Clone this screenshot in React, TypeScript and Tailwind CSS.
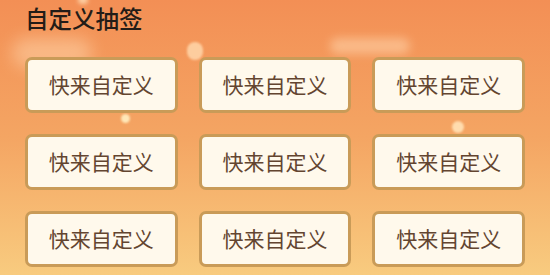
import React from 'react';

const items = Array.from({ length: 9 }, () => '快来自定义');

export default function App() {
  return (
    <div
      className="relative w-[550px] h-[275px] overflow-hidden bg-gradient-to-b from-[#f38f55] via-[#f4a563] to-[#f8cb7f]"
      style={{ fontFamily: '"Noto Sans CJK SC", "Noto Sans", sans-serif' }}
    >
      {/* bokeh glow */}
      <div className="absolute left-[12px] top-[38px] w-[80px] h-[30px] rounded-full bg-[#ffd9b0] opacity-50 blur-[8px]" />
      <div className="absolute left-[330px] top-[38px] w-[80px] h-[16px] rounded-full bg-[#ffd2a8] opacity-60 blur-[5px]" />
      <div className="absolute left-[187px] top-[42px] w-[16px] h-[18px] rounded-full bg-[#ffd3a6] opacity-90 blur-[1px]" />
      <div className="absolute left-[121px] top-[114px] w-[9px] h-[9px] rounded-full bg-[#ffe8b8] blur-[1px]" />
      <div className="absolute left-[452px] top-[121px] w-[12px] h-[12px] rounded-full bg-[#ffdcae] blur-[1px]" />
      <div className="absolute left-[78px] top-[-4px] w-[10px] h-[8px] rounded-full bg-[#ffe0b8] opacity-80 blur-[2px]" />

      <div className="relative px-[25px]">
        <h1 className="pt-[3px] h-[57px] text-[23.5px] leading-[30px] font-medium text-[#231c17]">自定义抽签</h1>
        <div className="grid grid-cols-3 gap-x-[21px] gap-y-[21px]">
          {items.map((t, i) => (
            <div
              key={i}
              className="h-[56px] rounded-[7px] border-[3px] border-[#c99b58] bg-[#fff9ec] flex items-center justify-center text-[21px] text-[#634530]"
            >
              {t}
            </div>
          ))}
        </div>
      </div>
    </div>
  );
}
